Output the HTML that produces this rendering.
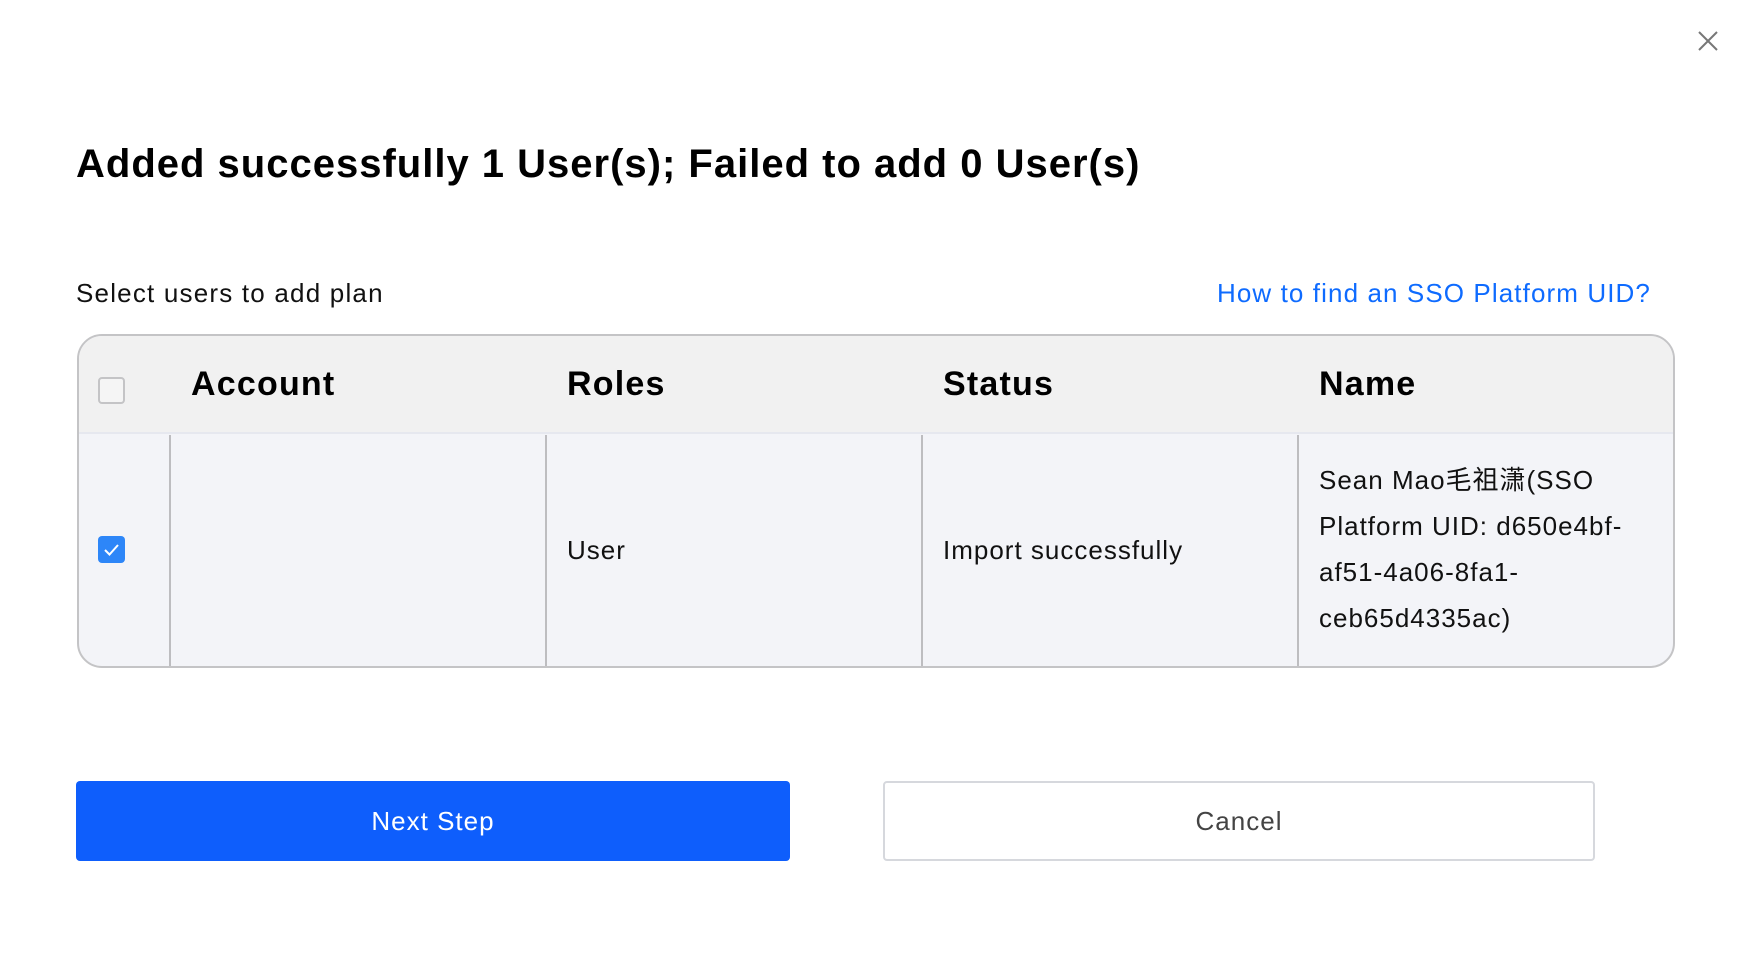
<!DOCTYPE html>
<html><head><meta charset="utf-8"><style>
*{box-sizing:border-box;margin:0;padding:0}
body{width:1754px;height:954px;background:#fff;font-family:"Liberation Sans","Noto Sans CJK SC",sans-serif;color:#000;position:relative;overflow:hidden}
.abs{position:absolute;white-space:nowrap}
.title{left:76px;top:140px;font-size:40px;font-weight:bold;line-height:48px;letter-spacing:1px}
.sub{left:76px;top:277px;font-size:26px;line-height:32px;color:#111;letter-spacing:1.2px}
.link{right:103px;top:277px;font-size:26px;line-height:32px;color:#0e6bff;letter-spacing:1.1px}
.table{position:absolute;left:77px;top:334px;width:1598px;height:334px;border:2px solid #c4c4c6;border-radius:25px;overflow:hidden;background:#f3f4f8}
.head{position:absolute;left:0;top:0;width:100%;height:98px;background:#f1f1f1;border-bottom:2px solid #e6e8ef}
.th{position:absolute;top:28px;font-size:34px;font-weight:bold;line-height:40px;letter-spacing:1.2px}
.vd{position:absolute;top:99px;bottom:0;width:2px;background:#bdbdc0}
.td{position:absolute;font-size:26px;line-height:46px;color:#111;letter-spacing:1px}
.cb{position:absolute;width:27px;height:27px;border-radius:4px}
.btn{position:absolute;top:781px;height:80px;border-radius:4px;font-size:26px;display:flex;align-items:center;justify-content:center;letter-spacing:1px}
</style></head><body>
<svg class="abs" style="left:1698px;top:31px" width="20" height="20" viewBox="0 0 20 20"><path d="M1 1L19 19M19 1L1 19" stroke="#777" stroke-width="2"/></svg>
<div class="abs title">Added successfully 1 User(s); Failed to add 0 User(s)</div>
<div class="abs sub">Select users to add plan</div>
<div class="abs link">How to find an SSO Platform UID?</div>
<div class="table">
 <div class="head"></div>
 <div class="cb" style="left:19px;top:41px;border:2px solid #c4c4c6;background:#f5f5f5"></div>
 <div class="th" style="left:112px">Account</div>
 <div class="th" style="left:488px">Roles</div>
 <div class="th" style="left:864px">Status</div>
 <div class="th" style="left:1240px">Name</div>
 <div class="vd" style="left:90px"></div>
 <div class="vd" style="left:466px"></div>
 <div class="vd" style="left:842px"></div>
 <div class="vd" style="left:1218px"></div>
 <div class="cb" style="left:19px;top:200px;background:#2d86f8"><svg width="27" height="27" viewBox="0 0 27 27"><path d="M7 14l4.5 4.5L20 9" stroke="#fff" stroke-width="2" fill="none"/></svg></div>
 <div class="td" style="left:488px;top:191px">User</div>
 <div class="td" style="left:864px;top:191px">Import successfully</div>
 <div class="td" style="left:1240px;top:121px;white-space:nowrap">Sean Mao毛祖潇(SSO<br>Platform UID: d650e4bf-<br>af51-4a06-8fa1-<br>ceb65d4335ac)</div>
</div>
<div class="btn" style="left:76px;width:714px;background:#0e5efc;color:#fff">Next Step</div>
<div class="btn" style="left:883px;width:712px;border:2px solid #d6d8dd;color:#444;background:#fff">Cancel</div>
</body></html>
